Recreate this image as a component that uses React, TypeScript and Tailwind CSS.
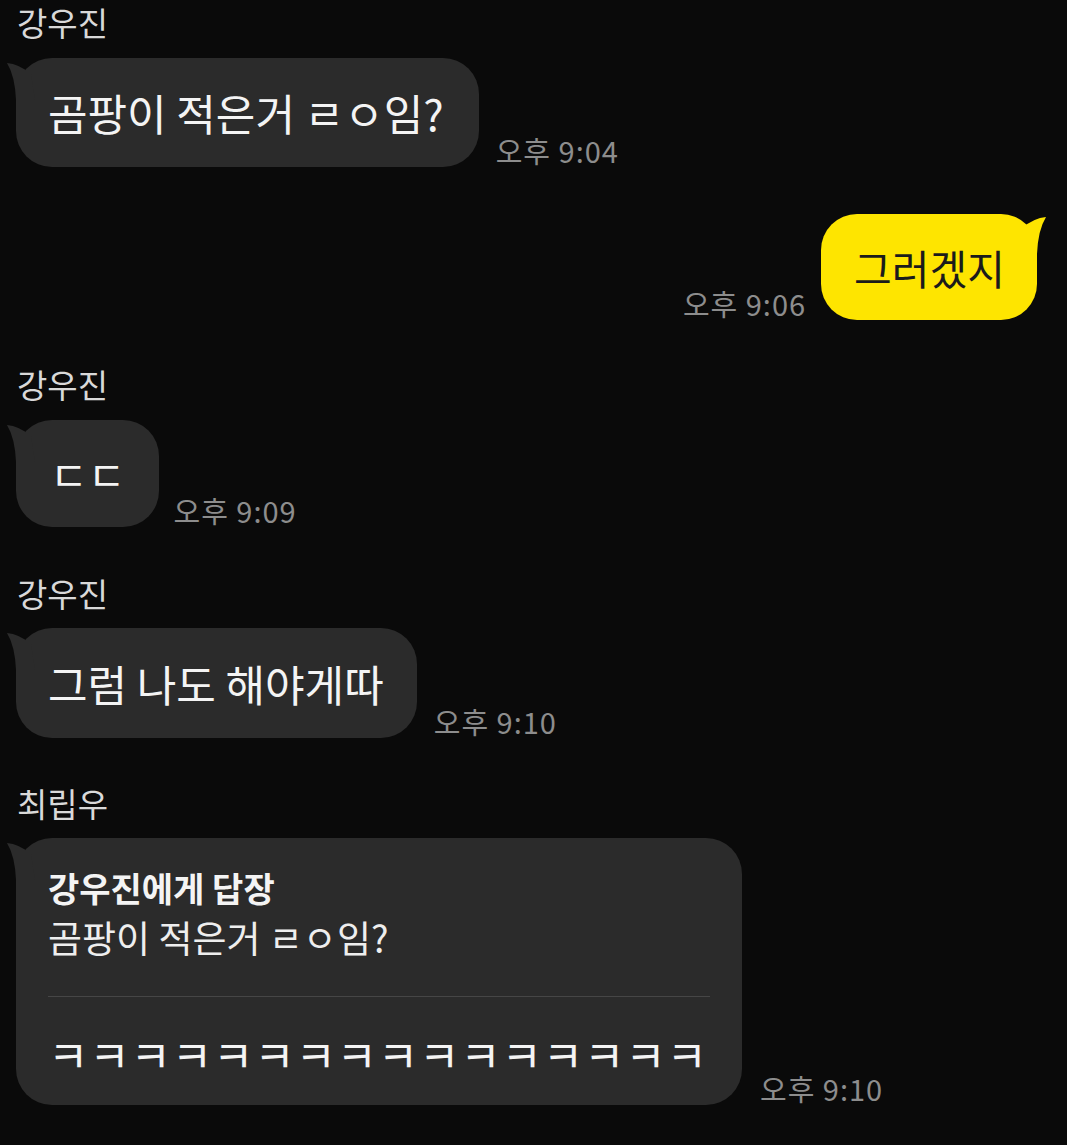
import React from 'react';

const font = { fontFamily: '"Noto Sans CJK KR", "Noto Sans", sans-serif' };

function Tail({ color, side = 'left' }: { color: string; side?: 'left' | 'right' }) {
    return (
        <svg
            width="30"
            height="40"
            viewBox="0 0 30 40"
            className={side === 'left' ? 'absolute -left-[9px] top-[2px]' : 'absolute -right-[9px] top-[0px] -scale-x-100'}
        >
            <path d="M0 3 Q 12 4 24 14 L 28 40 L 9 40 Q 8 16 0 3 Z" fill={color} />
        </svg>
    );
}

function Name({ children, className = '' }: { children: React.ReactNode; className?: string }) {
    return <div className={`text-[33px] leading-[44px] text-[#d9d9d9] ${className}`}>{children}</div>;
}

function Time({ children }: { children: React.ReactNode }) {
    return <div className="text-[29px] leading-[30px] tracking-[1px] text-[#8d8d8d] shrink-0 pb-[2px] whitespace-nowrap">{children}</div>;
}

function Bubble({ children, className = '' }: { children: React.ReactNode; className?: string }) {
    return (
        <div className={`relative bg-[#2b2b2b] rounded-[36px] text-[#f4f4f4] ${className}`}>
            <Tail color="#2b2b2b" />
            <div className="relative">{children}</div>
        </div>
    );
}

export default function App() {
    return (
        <div className="w-full min-h-[1145px] bg-[#0a0a0a] pl-4 pr-[30px] flex flex-col" style={font}>
            {/* 강우진 #1 */}
            <Name className="pl-[1px]">강우진</Name>
            <div className="mt-[14px] flex items-end gap-[17px]">
                <Bubble className="pl-[32px] pr-[35px] py-[30px] text-[43px] leading-[49px]">곰팡이 적은거 ㄹㅇ임?</Bubble>
                <Time>오후 9:04</Time>
            </div>

            {/* me */}
            <div className="mt-[47px] flex items-end justify-end gap-[15px]">
                <Time>오후 9:06</Time>
                <div className="relative bg-[#fee500] rounded-[36px] text-[#1b1b1b] pl-[33px] pr-[32px] py-[29px] text-[41px] leading-[48px]">
                    <Tail color="#fee500" side="right" />
                    <div className="relative">그러겠지</div>
                </div>
            </div>

            {/* 강우진 #2 */}
            <Name className="mt-[42px] pl-[1px]">강우진</Name>
            <div className="mt-[14px] flex items-end gap-[14px]">
                <Bubble className="pl-[34px] pr-[34px] py-[29px] text-[41px] leading-[49px]">ㄷㄷ</Bubble>
                <Time>오후 9:09</Time>
            </div>

            {/* 강우진 #3 */}
            <Name className="mt-[44px] pl-[1px]">강우진</Name>
            <div className="mt-[13px] flex items-end gap-[17px]">
                <Bubble className="pl-[32px] pr-[33px] py-[31px] text-[43px] leading-[48px]">그럼 나도 해야게따</Bubble>
                <Time>오후 9:10</Time>
            </div>

            {/* 최립우 reply */}
            <Name className="mt-[43px] pl-[1px]">최립우</Name>
            <div className="mt-[13px] flex items-end gap-[18px]">
                <Bubble className="w-[726px] pl-[32px] pr-[32px] pt-[30px] pb-[27px]">
                    <div className="text-[34px] leading-[40px] font-bold">강우진에게 답장</div>
                    <div className="mt-[7px] text-[37px] leading-[44px] text-[#eeeeee]">곰팡이 적은거 ㄹㅇ임?</div>
                    <div className="mt-[37px] h-px bg-[#464646]" />
                    <div className="mt-[33px] text-[44px] leading-[48px] tracking-[0.75px] whitespace-nowrap">ㅋㅋㅋㅋㅋㅋㅋㅋㅋㅋㅋㅋㅋㅋㅋㅋ</div>
                </Bubble>
                <Time>오후 9:10</Time>
            </div>
        </div>
    );
}
